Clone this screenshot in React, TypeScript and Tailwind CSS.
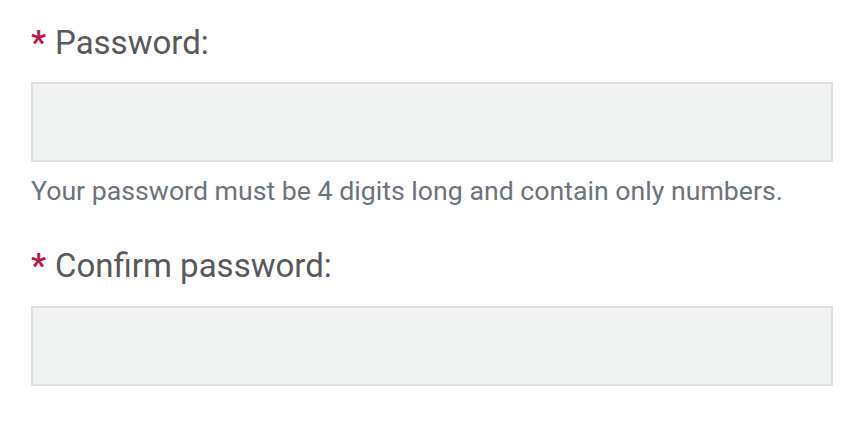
export default function App() {
  return (
    <div className="w-[864px] h-[423px] bg-white px-[31px] pt-[23px] font-['Roboto',sans-serif]">
      <div className="flex items-baseline gap-[9px] text-[33px] leading-[40px] text-[#57595b]">
        <span className="font-bold text-[#c0173f]">*</span>
        <span>Password:</span>
      </div>
      <input
        type="password"
        className="mt-[19px] block w-[802px] h-[80px] bg-[#f0f2f1] border-2 border-[#dcdee3] outline-none px-3"
      />
      <p className="mt-[13px] text-[26.7px] leading-[32px] text-[#6c737b]">
        Your password must be 4 digits long and contain only numbers.
      </p>
      <div className="mt-[39px] flex items-baseline gap-[9px] text-[33px] leading-[40px] text-[#57595b]">
        <span className="font-bold text-[#c0173f]">*</span>
        <span>Confirm password:</span>
      </div>
      <input
        type="password"
        className="mt-[20px] block w-[802px] h-[80px] bg-[#f0f2f1] border-2 border-[#dcdee3] outline-none px-3"
      />
    </div>
  );
}
